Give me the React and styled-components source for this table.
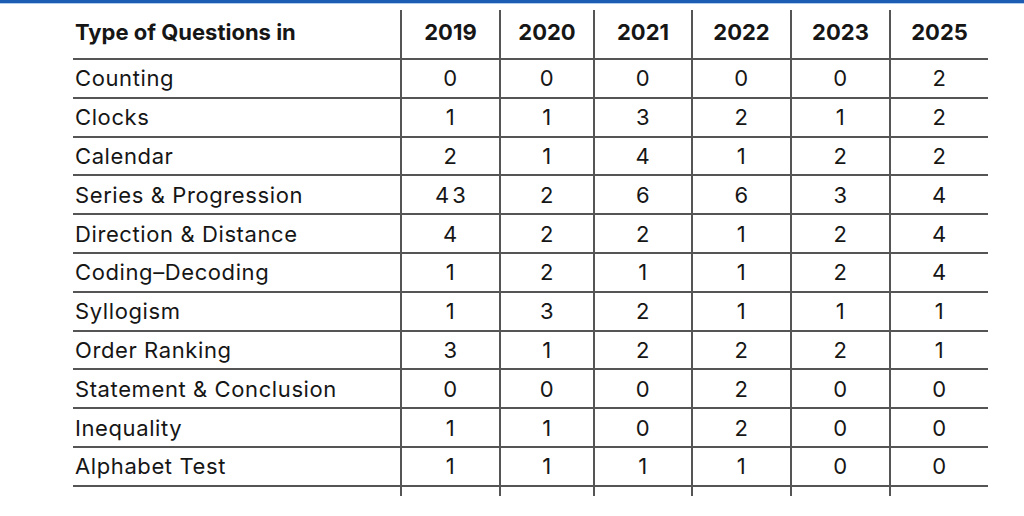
import styled, { createGlobalStyle } from 'styled-components';

const GlobalStyle = createGlobalStyle`
  html, body {
    margin: 0;
    padding: 0;
    background: #ffffff;
  }
  body {
    font-family: Inter, "Liberation Sans", sans-serif;
    color: #1a1a1a;
  }
`;

const Page = styled.div`
  width: 1024px;
  height: 516px;
  overflow: hidden;
  background: #ffffff;
`;

const TopBar = styled.div`
  height: 3px;
  background: #1c5db3;
  border-bottom: 1px solid #b3cdee;
`;

const Table = styled.div`
  margin: 6px 0 0 73px;
  width: 915px;
  display: grid;
  grid-template-columns: 327px 99px 94px 98px 99px 99px 99px;
  grid-template-rows: 50px repeat(11, 38.8px) 9px;
`;

const LINE = '#555555';

const Cell = styled.div`
  box-sizing: border-box;
  display: flex;
  align-items: center;
  justify-content: ${p => (p.$first ? 'flex-start' : 'center')};
  padding-left: ${p => (p.$first ? '2px' : '0')};
  border-bottom: ${p => (p.$tail ? 'none' : `2px solid ${LINE}`)};
  border-left: ${p => (p.$first ? 'none' : `2px solid ${LINE}`)};
  padding-bottom: ${p => (p.$head ? '5px' : '0')};
  font-size: 22px;
  font-weight: ${p => (p.$head ? 700 : 400)};
  letter-spacing: ${p => (p.$head ? '0' : '0.6px')};
  color: #161616;
  white-space: nowrap;
`;

const Wide = styled.span`
  letter-spacing: 3px;
  margin-right: -3px;
`;

const years = ['2019', '2020', '2021', '2022', '2023', '2025'];

const rows = [
  ['Counting', [0, 0, 0, 0, 0, 2]],
  ['Clocks', [1, 1, 3, 2, 1, 2]],
  ['Calendar', [2, 1, 4, 1, 2, 2]],
  ['Series & Progression', [43, 2, 6, 6, 3, 4]],
  ['Direction & Distance', [4, 2, 2, 1, 2, 4]],
  ['Coding–Decoding', [1, 2, 1, 1, 2, 4]],
  ['Syllogism', [1, 3, 2, 1, 1, 1]],
  ['Order Ranking', [3, 1, 2, 2, 2, 1]],
  ['Statement & Conclusion', [0, 0, 0, 2, 0, 0]],
  ['Inequality', [1, 1, 0, 2, 0, 0]],
  ['Alphabet Test', [1, 1, 1, 1, 0, 0]],
];

export default function App() {
  return (
    <Page>
      <GlobalStyle />
      <TopBar />
      <Table>
        <Cell $first $head>Type of Questions in</Cell>
        {years.map(y => (
          <Cell key={y} $head>{y}</Cell>
        ))}
        {rows.map(([label, vals]) => [
          <Cell key={label} $first>{label}</Cell>,
          ...vals.map((v, i) => (
            <Cell key={label + i}>{v > 9 ? <Wide>{v}</Wide> : v}</Cell>
          )),
        ])}
        <Cell $first $tail />
        {years.map(y => (
          <Cell key={'t' + y} $tail />
        ))}
      </Table>
    </Page>
  );
}
